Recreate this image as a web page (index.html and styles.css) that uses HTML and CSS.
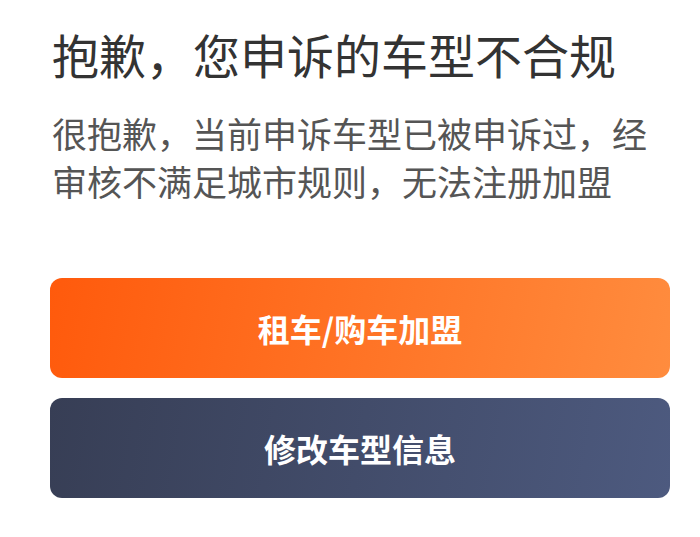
FILE: index.html
```html
<!DOCTYPE html>
<html lang="zh-CN">
<head>
<meta charset="utf-8">
<link rel="stylesheet" href="styles.css">
</head>
<body>
<main class="page">
  <h1 class="title">抱歉，您申诉的车型不合规</h1>
  <p class="desc">很抱歉，当前申诉车型已被申诉过，经审核不满足城市规则，无法注册加盟</p>
  <div class="actions">
    <button class="btn btn-primary">租车/购车加盟</button>
    <button class="btn btn-secondary">修改车型信息</button>
  </div>
</main>
</body>
</html>
```
FILE: styles.css
```css
html, body {
  margin: 0;
  padding: 0;
  background: #ffffff;
}
body {
  font-family: "Noto Sans CJK SC", "Noto Sans", sans-serif;
}
.page {
  width: 700px;
  height: 537px;
  box-sizing: border-box;
  padding: 22px 30px 0 50px;
}
.title {
  margin: 0;
  font-size: 47px;
  line-height: 64px;
  font-weight: 400;
  color: #333333;
  padding-left: 2px;
}
.desc {
  margin: 23px 0 0;
  font-size: 35px;
  line-height: 48px;
  color: #555555;
  padding-left: 2px;
}
.actions {
  margin-top: 73px;
  display: flex;
  flex-direction: column;
  gap: 20px;
}
.btn {
  border: none;
  height: 100px;
  border-radius: 12px;
  font-family: "Noto Sans CJK SC", sans-serif;
  font-size: 32px;
  font-weight: 700;
  color: #ffffff;
  width: 100%;
}
.btn-primary {
  background: linear-gradient(100deg, #ff5a0c 0%, #ff8c3e 100%);
}
.btn-secondary {
  background: linear-gradient(100deg, #373e55 0%, #4d5a7f 100%);
}
```
